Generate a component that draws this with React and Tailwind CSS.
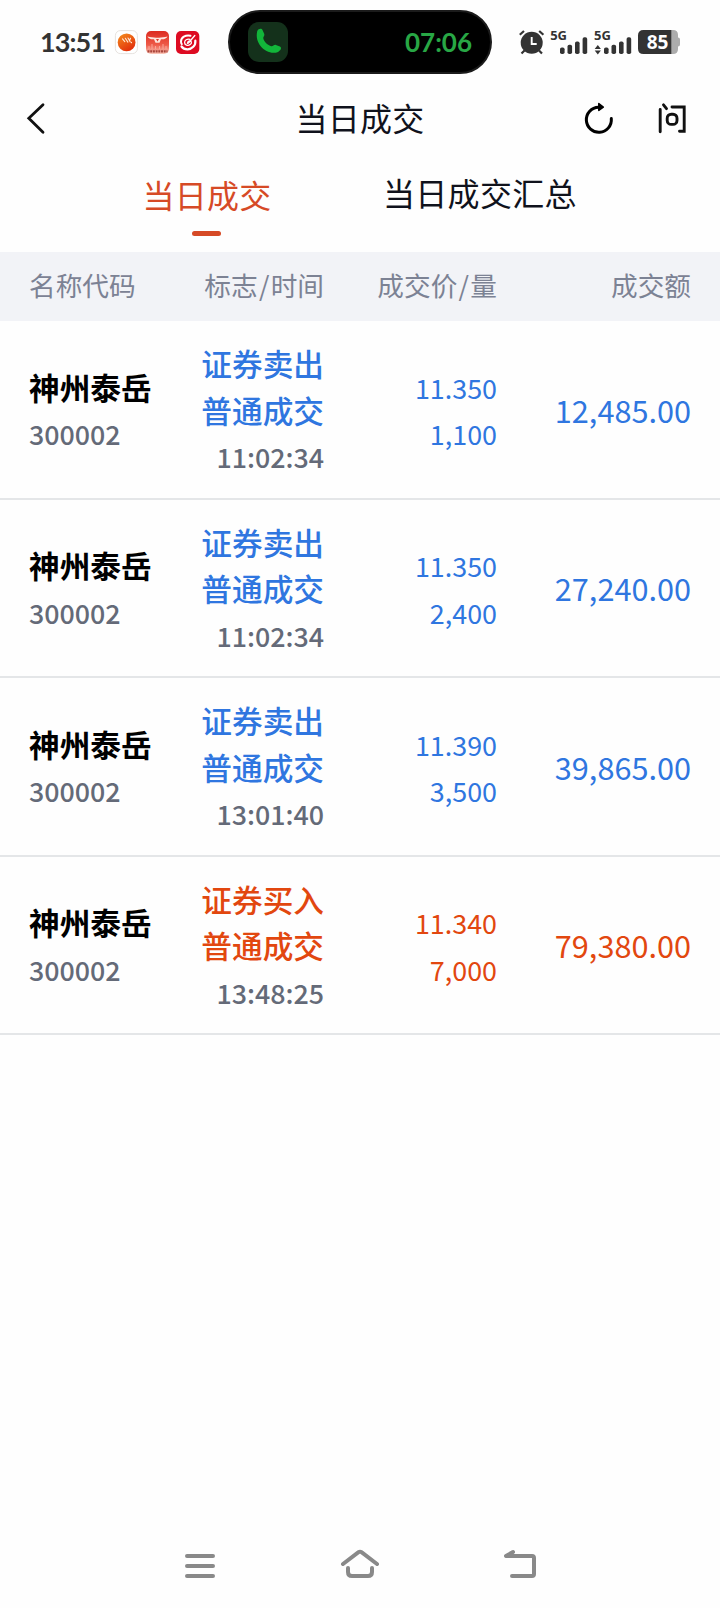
const trades = [
    { action: '证券卖出', time: '11:02:34', price: '11.350', volume: '1,100', amount: '12,485.00', side: 'sell' },
    { action: '证券卖出', time: '11:02:34', price: '11.350', volume: '2,400', amount: '27,240.00', side: 'sell' },
    { action: '证券卖出', time: '13:01:40', price: '11.390', volume: '3,500', amount: '39,865.00', side: 'sell' },
    { action: '证券买入', time: '13:48:25', price: '11.340', volume: '7,000', amount: '79,380.00', side: 'buy' },
];

function AppBadges() {
    return (
        <svg className="ml-3 shrink-0" width="86" height="26" viewBox="114 29 86 26">
            <defs>
                <linearGradient id="sun" x1="0" y1="0" x2="0.6" y2="1">
                    <stop offset="0" stopColor="#f5901f" />
                    <stop offset="1" stopColor="#e2300c" />
                </linearGradient>
                <linearGradient id="bull" x1="0" y1="0" x2="0" y2="1">
                    <stop offset="0" stopColor="#dc2b20" />
                    <stop offset="0.6" stopColor="#ee5a48" />
                    <stop offset="1" stopColor="#fbc9bb" />
                </linearGradient>
            </defs>
            <rect x="115.4" y="30.6" width="22" height="23" rx="5" fill="#fff" stroke="#e0dad6" strokeWidth="0.8" />
            <circle cx="126.6" cy="42.4" r="8.9" fill="url(#sun)" />
            <path d="M122.5 38.800l2.300 2.800M125.300 38.300l2.600 3.800M128 38l2.300 4M130.500 38.200l-1 2.500M131.500 42.200v.6" fill="none" stroke="#ffe9d6" strokeWidth="1.1" strokeLinecap="round" />

            <rect x="146" y="31" width="23" height="23" rx="5" fill="url(#bull)" />
            <path d="M147.5 36.5c3 1.2 6 .6 8.500 1.300h3c2.500-.7 5.500-.1 8.500-1.300c-1 2.300-4 3.200-6.500 2.700l-1.500 3.500h-4l-1.500-3.500c-2.500.5-5.500-.4-6.500-2.700z" fill="#fde6dd" />
            <path d="M156 39l1.500 2.500L159 39z" fill="#e0382b" />
            <path d="M149 49v-3M152 49v-5M155.500 49v-3M159.500 49v-3M163 49v-5M166 49v-3" stroke="#f9a598" strokeWidth="1" />
            <path d="M147.500 51.300h20" stroke="#a8443a" strokeWidth="2.200" strokeDasharray="2 0.700" />

            <rect x="176" y="31" width="23.300" height="23" rx="5" fill="#dd0b22" />
            <path d="M190.500 35.800c-5-1-9.500 1.500-9.500 5.700c0 1 .3 2 .8 2.700" fill="none" stroke="#fff" strokeWidth="2" strokeLinecap="round" />
            <path d="M190 39.300c-3-.8-5.500.8-5.400 3.300s3.200 3.800 5.600 2s.8-3.800-.6-3.600s-2 1.400-2.200 2.300" fill="none" stroke="#fff" strokeWidth="1.300" strokeLinecap="round" />
            <path d="M195.300 40.500c.8 5-3.500 9-8 8.800c-2.500 0-4.500-1-5.800-2.800" fill="none" stroke="#fff" strokeWidth="2.200" strokeLinecap="round" />
            <path d="M188.500 43l6.300-7.500" stroke="#fff" strokeWidth="1.300" strokeLinecap="round" />
        </svg>
    );
}

function CallPill() {
    return (
        <div className="ml-[28px] flex h-16 w-[264px] shrink-0 items-center justify-between rounded-full border-2 border-[#1b1b1b] bg-black pl-[18px] pr-[18px]">
            <svg width="40" height="40" viewBox="0 0 40 40">
                <rect width="40" height="40" rx="11" fill="#14311b" />
                <path d="M9.200 9.200C10.500 6.600 13.500 6 14.600 8.200L16.300 12c.6 1.700-1.300 2.600-1 4.300c.5 3.200 4.500 7.300 8 7.900c1.900.2 2.600-1.800 4.600-1.300l4 1.700c2.300 1.300.7 4-1.800 5.300C19.500 34 6 22.500 9.200 9.200z" fill="#12b53a" />
            </svg>
            <span className="font-['Lato'] text-[26px] font-bold leading-none text-[#28a745]">07:06</span>
        </div>
    );
}

function StatusIcons() {
    return (
        <svg className="ml-[25px] shrink-0" width="166" height="30" viewBox="517 27 166 30">
            <g fill="#333">
                <circle cx="531.700" cy="42.700" r="11" />
                <path d="M519.800 34.800l4.200-3.800M543.400 34.800l-4.200-3.800M524.500 50.500l-3 3M539 50.500l3 3" stroke="#333" strokeWidth="2.200" />
                <path d="M531.700 37v7h5" fill="none" stroke="#fff" strokeWidth="1.900" />

                <text x="550.200" y="40" fontSize="13" fontWeight="700" fontFamily="Noto Sans, sans-serif">5G</text>
                <rect x="560" y="47.500" width="4.600" height="6.500" rx="1.800" />
                <rect x="567.500" y="44.800" width="4.600" height="9.200" rx="1.800" />
                <rect x="575" y="41.500" width="4.600" height="12.500" rx="1.800" />
                <rect x="582.600" y="37.300" width="4.600" height="16.700" rx="1.800" />

                <text x="594" y="40" fontSize="13" fontWeight="700" fontFamily="Noto Sans, sans-serif">5G</text>
                <path d="M594.700 49l3.100-4 3.100 4zM594.700 50.500l3.100 4 3.100-4z" />
                <rect x="604" y="47.500" width="4.600" height="6.500" rx="1.800" />
                <rect x="611.500" y="44.800" width="4.600" height="9.200" rx="1.800" />
                <rect x="619" y="41.500" width="4.600" height="12.500" rx="1.800" />
                <rect x="626.600" y="37.300" width="4.600" height="16.700" rx="1.800" />
            </g>
            <path d="M671 30h2q5 0 5 5v2.500q2 0 2 2v5q0 2-2 2V49q0 5-5 5h-2z" fill="#acacac" />
            <path d="M671.300 30H643.500q-5.500 0-5.500 5.500v13q0 5.500 5.500 5.500h27.800z" fill="#333" />
            <text x="657.500" y="48.700" fontSize="19" fontWeight="700" fill="#fff" textAnchor="middle" fontFamily="Noto Sans, sans-serif">85</text>
        </svg>
    );
}

function StatusBar() {
    return (
        <div className="flex h-[84px] items-center pl-10">
            <span className="w-[62px] whitespace-nowrap pb-0.5 font-['Lato'] text-[27px] font-bold leading-none tracking-[-0.9px] text-[#333]">13:51</span>
            <AppBadges />
            <CallPill />
            <StatusIcons />
        </div>
    );
}

function TitleBar() {
    return (
        <header className="grid h-[68px] grid-cols-[1fr_auto_1fr] items-center px-6">
            <svg width="24" height="34" viewBox="24 101 24 34" fill="none" stroke="#111" strokeWidth="2.800" strokeLinecap="round">
                <path d="M43 104.800L28.800 118.300L43 132.300" />
            </svg>
            <h1 className="pb-[3px] text-[32px] leading-none tracking-[0.2px]">当日成交</h1>
            <div className="flex items-center justify-end gap-10 pr-2">
                <svg width="32" height="34" viewBox="584 101 32 34" fill="none" stroke="#000" strokeWidth="3" strokeLinecap="round">
                    <path d="M611.300 118.600A12.500 12.500 0 1 1 598.500 107.300" />
                    <path d="M598.800 103.500l4.500 3.700-4.500 3.200z" fill="#000" strokeWidth="1.500" strokeLinejoin="round" />
                </svg>
                <svg width="32" height="34" viewBox="656 101 32 34" fill="none" stroke="#111" strokeWidth="2.900" strokeLinecap="round">
                    <path d="M660.200 109.500V131.700M663.500 104.900L666.500 108.600M672 107H684.200V131.200H679.500" />
                    <rect x="667.200" y="114.200" width="9.800" height="10.200" rx="4" />
                </svg>
            </div>
        </header>
    );
}

function Tabs() {
    return (
        <nav className="flex h-[100px] whitespace-nowrap text-[32px] leading-none tracking-[0.3px]">
            <div className="ml-[142px] flex w-[130px] flex-col items-center pt-[26px] text-[#d64a26]">
                <span>当日成交</span>
                <span className="mt-[21px] mr-px h-[5px] w-[29px] rounded-full bg-[#d64a26]" />
            </div>
            <div className="ml-[111px] pt-[24px]">当日成交汇总</div>
        </nav>
    );
}

function TradeRow({ trade }) {
    const color = trade.side === 'buy' ? 'text-[#e2470f]' : 'text-[#2f76e0]';

    return (
        <div className="flex h-[178.5px] items-center border-b-2 border-[#e4e6e8] px-[29px] leading-[46.4px]">
            <div className="w-[145px] pt-[3px]">
                <p className="text-[30.67px] font-bold text-black">神州泰岳</p>
                <p className="pt-px text-[26.8px] font-medium text-[#646a78]">300002</p>
            </div>
            <div className={`w-[150px] pt-[2.5px] text-right ${color}`}>
                <p className="text-[30.67px] font-medium">{trade.action}</p>
                <p className="text-[30.67px] font-medium">普通成交</p>
                <p className="pt-[1.5px] text-[26.8px] font-medium text-[#646a78]">{trade.time}</p>
            </div>
            <div className={`w-[173px] pt-1 text-right text-[26.9px] ${color}`}>
                <p>{trade.price}</p>
                <p>{trade.volume}</p>
            </div>
            <p className={`flex-1 pt-px text-right text-[30.67px] ${color}`}>{trade.amount}</p>
        </div>
    );
}

function SystemNav() {
    return (
        <div className="flex h-[88px] items-center justify-center gap-[120px] pt-0.5">
            <svg width="40" height="32" viewBox="180 1549 40 32" stroke="#898989" strokeWidth="4" strokeLinecap="round">
                <path d="M187 1556H213M187 1566H213M187 1576H213" />
            </svg>
            <svg width="40" height="32" viewBox="340 1549 40 32" fill="none" stroke="#898989" strokeWidth="4" strokeLinecap="round">
                <path d="M343 1564L358.500 1552.200Q360 1551.200 361.500 1552.200L377 1564" />
                <path d="M348 1568V1572Q348 1576 352 1576H368Q372 1576 372 1572V1568" />
            </svg>
            <svg width="40" height="32" viewBox="500 1549 40 32" fill="none" stroke="#898989" strokeWidth="4" strokeLinecap="round" strokeLinejoin="round">
                <path d="M513 1552L506 1556H532Q534 1556 534 1558V1574Q534 1576 532 1576H512" />
            </svg>
        </div>
    );
}

export default function App() {
    return (
        <div className="flex h-[1608px] w-[720px] flex-col overflow-hidden bg-[#fefefe] font-['Noto_Sans_CJK_SC',sans-serif] text-[#10121c]">
            <StatusBar />
            <TitleBar />
            <Tabs />
            <div className="flex h-[69px] items-center bg-[#f2f3f7] px-[29px] pb-0.5 text-[26.67px] leading-none text-[#7c8294]">
                <span className="w-[145px]">名称代码</span>
                <span className="w-[150px] text-right">标志<span className="px-[1.3px]">/</span>时间</span>
                <span className="w-[173px] text-right">成交价<span className="px-[1.3px]">/</span>量</span>
                <span className="flex-1 text-right">成交额</span>
            </div>
            <main className="flex-1">
                {trades.map((trade, i) => (
                    <TradeRow key={i} trade={trade} />
                ))}
            </main>
            <SystemNav />
        </div>
    );
}
